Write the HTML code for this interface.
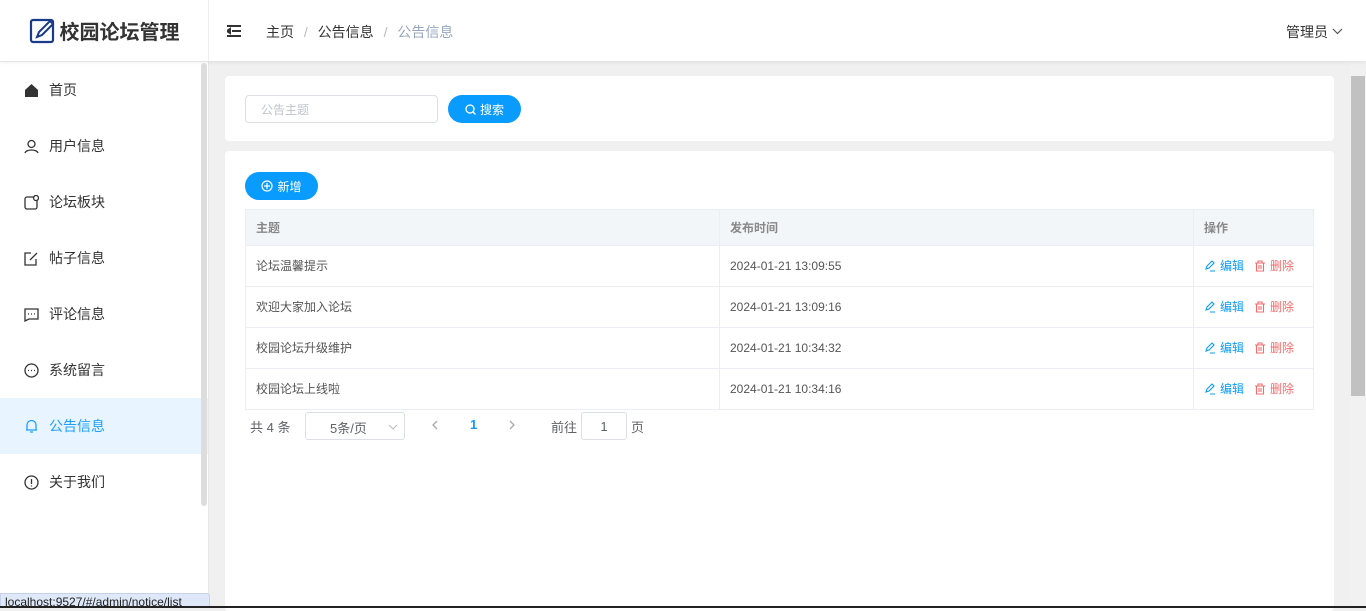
<!DOCTYPE html><html><head><meta charset="utf-8"><style>
*{margin:0;padding:0;box-sizing:border-box}
body{width:1366px;height:608px;overflow:hidden;font-family:"Liberation Sans","Noto Sans CJK SC",sans-serif;font-size:13px;color:#333;background:#f0f0f0;position:relative}
.hdr{position:absolute;left:0;top:0;width:1366px;height:61px;background:#fff;box-shadow:0 1px 4px rgba(0,0,0,.08);z-index:2}
.logo{position:absolute;left:0;top:0;width:209px;height:61px;border-right:1px solid #eee;display:flex;align-items:center;justify-content:center;font-size:20px;font-weight:bold;color:#333}
.side{position:absolute;left:0;top:62px;width:209px;height:546px;background:#fff;border-right:1px solid #e6e6e6}
.mi{height:56px;display:flex;align-items:center;padding-left:24px;font-size:14px;color:#333}
.mi svg{margin-right:10px}
.mi.act{background:#e8f4ff;color:#1e9fff}
.card{position:absolute;background:#fff;border-radius:4px;left:225px;width:1109px}
.btn{position:absolute;height:28px;border-radius:14px;background:#0a9bff;color:#fff;font-size:12px;display:flex;align-items:center;justify-content:center}
.btn svg{margin-right:4px}
table{border-collapse:collapse;position:absolute;left:20px;top:58px;width:1069px;font-size:12px}
td,th{border:1px solid #ebeef5;height:41px;padding-left:10px;text-align:left;color:#555;font-weight:normal;padding-top:0;line-height:38px}
th{height:36px;line-height:34px;background:#f3f6f9;color:#888;font-weight:bold}
.e{color:#0a9bff}.d{color:#f56c6c;margin-left:10px}
.e svg,.d svg{vertical-align:-2px;margin-right:4px}
</style></head><body>
<div class="hdr">
<div class="logo"><svg width="28" height="28" viewBox="0 0 28 28" style="margin-right:3px"><rect x="2" y="3" width="22" height="22" rx="2" fill="none" stroke="#1a3a8a" stroke-width="2.2"/><path d="M8 20l2-5 11-11 3 3-11 11z" fill="none" stroke="#1a3a8a" stroke-width="2"/></svg>校园论坛管理</div>
<svg style="position:absolute;left:227px;top:25px" width="14" height="12"><path d="M0 1h14M5 6h9M0 11h14M0 6l3-2v4z" stroke="#333" stroke-width="2" fill="#333"/></svg>
<div style="position:absolute;left:266px;top:22px;font-size:14px;color:#333">主页 <span style="color:#bbb;margin:0 6px">/</span> 公告信息 <span style="color:#bbb;margin:0 6px">/</span> <span style="color:#97a8be">公告信息</span></div>
<div style="position:absolute;left:1286px;top:22px;font-size:14px">管理员 <svg width="11" height="8" style="vertical-align:1px"><path d="M1 1l4.5 4.5L10 1" fill="none" stroke="#555" stroke-width="1.2"/></svg></div>
</div>
<div class="side">
<div style="position:absolute;left:201px;top:1px;width:6px;height:443px;background:#ddd;border-radius:3px"></div>
<div class="mi"><svg width="15" height="15"><path d="M1 7L7.5 1 14 7v7H1z" fill="#333"/></svg>首页</div>
<div class="mi"><svg width="15" height="15" fill="none" stroke="#333" stroke-width="1.3"><circle cx="7.5" cy="5" r="3.5"/><path d="M1 14c1-4 12-4 13 0"/></svg>用户信息</div>
<div class="mi"><svg width="15" height="15" fill="none" stroke="#333" stroke-width="1.3"><rect x="1" y="2" width="12" height="12" rx="2"/><circle cx="12" cy="3" r="2.5" fill="#fff"/></svg>论坛板块</div>
<div class="mi"><svg width="15" height="15" fill="none" stroke="#333" stroke-width="1.3"><path d="M12 8v6H1V2h6M6 9l7-7"/></svg>帖子信息</div>
<div class="mi"><svg width="15" height="15" fill="none" stroke="#333" stroke-width="1.3"><path d="M1 2h13v10H5l-4 2z"/><path d="M4 7h1M7 7h1M10 7h1"/></svg>评论信息</div>
<div class="mi"><svg width="15" height="15" fill="none" stroke="#333" stroke-width="1.3"><circle cx="7.5" cy="7.5" r="6.5"/><path d="M4 7.5h1M7 7.5h1M10 7.5h1"/></svg>系统留言</div>
<div class="mi act"><svg width="15" height="15" fill="none" stroke="#1e9fff" stroke-width="1.3"><path d="M3 11V6a4.5 4.5 0 019 0v5H2h11M6 13h3"/></svg>公告信息</div>
<div class="mi"><svg width="15" height="15" fill="none" stroke="#333" stroke-width="1.3"><circle cx="7.5" cy="7.5" r="6.5"/><path d="M7.5 4v5M7.5 10.5v1"/></svg>关于我们</div>
</div>
<div style="position:absolute;left:0;top:593px;width:210px;height:15px;background:#dee8f8;border:1px solid #c5d3ea;border-radius:0 3px 0 0;font-size:12px;color:#222;padding-left:4px;line-height:16px;overflow:hidden">localhost:9527/#/admin/notice/list</div>
<div class="card" style="top:76px;height:65px">
<div style="position:absolute;left:20px;top:19px;width:193px;height:28px;border:1px solid #dcdfe6;border-radius:4px;color:#c0c4cc;font-size:12px;padding:5px 15px">公告主题</div>
<div class="btn" style="left:223px;top:19px;width:73px"><svg width="11" height="11" fill="none" stroke="#fff" stroke-width="1.3"><circle cx="5" cy="5" r="4"/><path d="M8 8l2.5 2.5"/></svg>搜索</div>
</div>
<div class="card" style="top:151px;height:460px">
<div class="btn" style="left:20px;top:21px;width:73px"><svg width="12" height="12" fill="none" stroke="#fff" stroke-width="1.2"><circle cx="6" cy="6" r="5"/><path d="M6 3v6M3 6h6"/></svg>新增</div>
<table>
<tr><th style="width:474px">主题</th><th style="width:474px">发布时间</th><th>操作</th></tr>
<tr><td>论坛温馨提示</td><td>2024-01-21 13:09:55</td><td><span class="e"><svg width="12" height="12" fill="none" stroke="#0a9bff" stroke-width="1.1"><path d="M2 9l1-3 5-5 2 2-5 5zM6 11h5"/></svg>编辑</span><span class="d"><svg width="12" height="12" fill="none" stroke="#f56c6c" stroke-width="1.1"><path d="M1 3h10M4 3V1h4v2M2.5 3v8h7V3M5 5v4M7 5v4"/></svg>删除</span></td></tr>
<tr><td>欢迎大家加入论坛</td><td>2024-01-21 13:09:16</td><td><span class="e"><svg width="12" height="12" fill="none" stroke="#0a9bff" stroke-width="1.1"><path d="M2 9l1-3 5-5 2 2-5 5zM6 11h5"/></svg>编辑</span><span class="d"><svg width="12" height="12" fill="none" stroke="#f56c6c" stroke-width="1.1"><path d="M1 3h10M4 3V1h4v2M2.5 3v8h7V3M5 5v4M7 5v4"/></svg>删除</span></td></tr>
<tr><td>校园论坛升级维护</td><td>2024-01-21 10:34:32</td><td><span class="e"><svg width="12" height="12" fill="none" stroke="#0a9bff" stroke-width="1.1"><path d="M2 9l1-3 5-5 2 2-5 5zM6 11h5"/></svg>编辑</span><span class="d"><svg width="12" height="12" fill="none" stroke="#f56c6c" stroke-width="1.1"><path d="M1 3h10M4 3V1h4v2M2.5 3v8h7V3M5 5v4M7 5v4"/></svg>删除</span></td></tr>
<tr><td>校园论坛上线啦</td><td>2024-01-21 10:34:16</td><td><span class="e"><svg width="12" height="12" fill="none" stroke="#0a9bff" stroke-width="1.1"><path d="M2 9l1-3 5-5 2 2-5 5zM6 11h5"/></svg>编辑</span><span class="d"><svg width="12" height="12" fill="none" stroke="#f56c6c" stroke-width="1.1"><path d="M1 3h10M4 3V1h4v2M2.5 3v8h7V3M5 5v4M7 5v4"/></svg>删除</span></td></tr>
</table>
<div style="position:absolute;left:25px;top:266px;color:#606266">共 4 条</div>
<div style="position:absolute;left:80px;top:261px;width:100px;height:28px;border:1px solid #dcdfe6;border-radius:3px;color:#606266;padding:5px 0 0 24px">5条/页<svg width="10" height="6" style="position:absolute;left:82px;top:11px"><path d="M1 1l4 4 4-4" fill="none" stroke="#bbb"/></svg></div>
<svg style="position:absolute;left:206px;top:269px" width="7" height="10"><path d="M6 1L2 5l4 4" fill="none" stroke="#aaa" stroke-width="1.3"/></svg>
<div style="position:absolute;left:245px;top:266px;color:#0a9bff;font-weight:bold">1</div>
<svg style="position:absolute;left:284px;top:269px" width="7" height="10"><path d="M1 1l4 4-4 4" fill="none" stroke="#aaa" stroke-width="1.3"/></svg>
<div style="position:absolute;left:326px;top:266px;color:#606266">前往</div>
<div style="position:absolute;left:356px;top:261px;width:46px;height:28px;border:1px solid #dcdfe6;border-radius:3px;text-align:center;padding-top:6px;color:#606266">1</div>
<div style="position:absolute;left:406px;top:266px;color:#606266">页</div>
</div>
<div style="position:absolute;left:1350px;top:61px;width:16px;height:547px;background:#f1f1f1"><div style="position:absolute;left:1px;top:15px;width:14px;height:320px;background:#c1c1c1"></div></div>
<div style="position:absolute;left:0;top:606px;width:1366px;height:2px;background:#222"></div>
</body></html>
